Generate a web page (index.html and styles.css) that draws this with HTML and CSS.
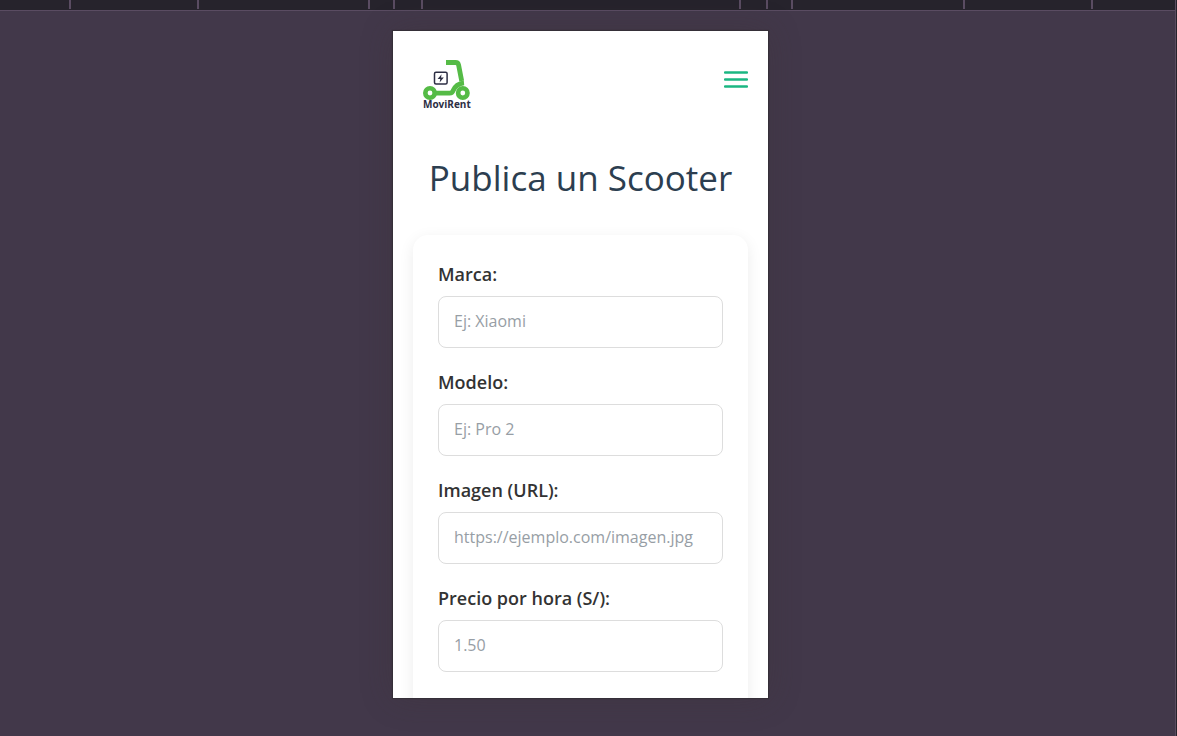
FILE: index.html
```html
<!DOCTYPE html>
<html lang="es">
<head>
<meta charset="utf-8">
<meta name="viewport" content="width=device-width, initial-scale=1">
<title>MoviRent - Publica un Scooter</title>
<link rel="stylesheet" href="styles.css">
</head>
<body>
<div class="viewer">
  <div class="ruler" aria-hidden="true">
    <div class="mark mark-laptop"><div class="mark mark-tablet"><div class="mark mark-mobile-l"><div class="mark mark-mobile-m"><div class="mark mark-mobile-s"></div></div></div></div></div>
  </div>
  <div class="stage">
    <div class="device">
      <header class="topbar">
        <a class="logo" href="#" aria-label="MoviRent">
          <svg class="scooter" viewBox="0 0 50 42" fill="none" aria-hidden="true">
            <path d="M23 3.500h9.500c2 0 2.700.7 3.100 2.500L38.700 22" stroke="#55bb46" stroke-width="4.800"/>
            <path d="M41 23.800c-6 .6-9 3.200-10.800 7.700-.6 1.700-1.700 2.600-3.500 2.600H12" stroke="#55bb46" stroke-width="4.800"/>
            <circle cx="7" cy="34" r="4.700" fill="#fff" stroke="#55bb46" stroke-width="4.600"/>
            <circle cx="39.800" cy="34" r="4.700" fill="#fff" stroke="#55bb46" stroke-width="4.600"/>
            <rect x="11.500" y="13.300" width="12.600" height="11.600" rx="1.500" stroke="#2d2e44" stroke-width="1.500"/>
            <path d="M18.600 15.200l-4 4.700h2.700l-.7 3.500 4.200-5h-2.800z" fill="#2d2e44"/>
          </svg>
          <span class="brand">MoviRent</span>
        </a>
        <button class="menu" type="button" aria-label="Abrir menú">
          <svg viewBox="0 0 24 18" fill="none" stroke="#1bb782" stroke-width="2.300" stroke-linecap="round" aria-hidden="true">
            <path d="M1 1.500h22M1 8.500h22M1 15.500h22"/>
          </svg>
        </button>
      </header>
      <main class="content">
        <h1 class="title">Publica un Scooter</h1>
        <form class="card">
          <div class="field">
            <label class="label" for="marca">Marca:</label>
            <input class="input" id="marca" type="text" placeholder="Ej: Xiaomi">
          </div>
          <div class="field">
            <label class="label" for="modelo">Modelo:</label>
            <input class="input" id="modelo" type="text" placeholder="Ej: Pro 2">
          </div>
          <div class="field">
            <label class="label" for="imagen">Imagen (URL):</label>
            <input class="input" id="imagen" type="url" placeholder="https://ejemplo.com/imagen.jpg">
          </div>
          <div class="field">
            <label class="label" for="precio">Precio por hora (S/):</label>
            <input class="input" id="precio" type="text" inputmode="decimal" placeholder="1.50">
          </div>
        </form>
      </main>
    </div>
  </div>
</div>
</body>
</html>
```
FILE: styles.css
```css
* {
  box-sizing: border-box;
}

body {
  margin: 0;
  background: #26232c;
  font-family: "Open Sans", "Noto Sans", sans-serif;
  color: #333;
}

.viewer {
  display: flex;
  flex-direction: column;
  height: 100vh;
  margin-right: 1px;
  border-right: 1px solid #5a4c60;
}

.ruler {
  display: flex;
  justify-content: center;
  flex: none;
  height: 11px;
  padding: 0 14px 1px 0;
  border-bottom: 1px solid #5a4c62;
  background: #26232c;
}

.mark {
  display: flex;
  justify-content: center;
  flex: none;
  height: 9px;
  border: solid #5a4c62;
  border-width: 0 2px;
}

.mark-laptop { width: 1024px; }
.mark-tablet { width: 768px; }
.mark-mobile-l { width: 425px; }
.mark-mobile-m { width: 375px; }
.mark-mobile-s { width: 320px; }

.stage {
  display: flex;
  justify-content: center;
  flex: 1;
  min-height: 0;
  padding: 20px 14px 38px 0;
  background: #42384a;
}

.device {
  width: 100%;
  max-width: 375px;
  overflow: hidden;
  background: #fff;
  box-shadow: 0 0 1px 1px #352f38, 0 0 30px rgba(60, 50, 50, 0.3);
}

.topbar {
  display: flex;
  align-items: center;
  justify-content: space-between;
  height: 97px;
  padding: 0 20px 0 30px;
}

.logo {
  display: flex;
  flex-direction: column;
  width: 50px;
  padding-top: 8px;
  color: #2d2e44;
  text-decoration: none;
}

.scooter {
  display: block;
  width: 50px;
  height: 42px;
}

.brand {
  font-size: 10px;
  font-weight: 700;
  line-height: 7px;
}

.menu {
  padding: 0;
  border: 0;
  background: none;
}

.menu svg {
  display: block;
  width: 24px;
  height: 18px;
}

.content {
  padding: 23px 20px;
}

.title {
  margin: 0 0 31px;
  color: #2c3e50;
  font-size: 35px;
  font-weight: 400;
  line-height: 53px;
  text-align: center;
  white-space: nowrap;
}

.card {
  display: flex;
  flex-direction: column;
  gap: 20px;
  min-height: 600px;
  padding: 25px;
  border-radius: 15px;
  background: #fff;
  box-shadow: 0 4px 15px rgba(0, 0, 0, 0.08);
}

.field {
  display: flex;
  flex-direction: column;
  gap: 8px;
}

.label {
  font-size: 18px;
  font-weight: 560;
  line-height: 28px;
}

.input {
  width: 100%;
  height: 52px;
  padding: 0 15px 2px;
  border: 1px solid #ddd;
  border-radius: 8px;
  background: #fff;
  color: #333;
  font-family: inherit;
  font-size: 16px;
}

.input::placeholder {
  color: #979ea5;
  opacity: 1;
}
```
